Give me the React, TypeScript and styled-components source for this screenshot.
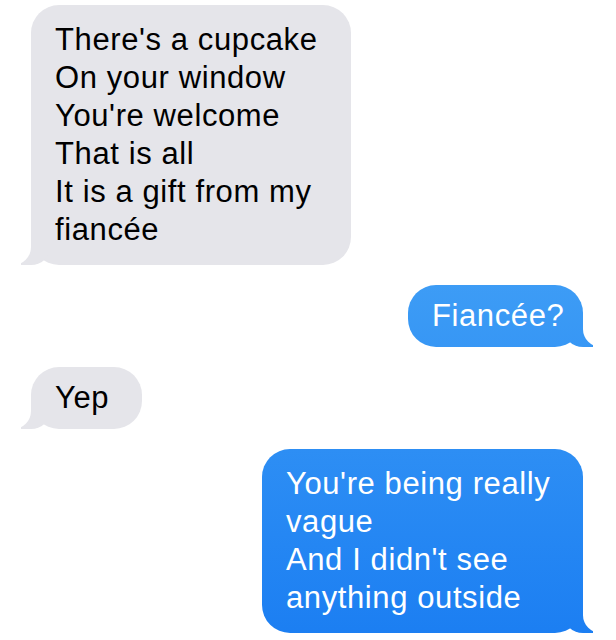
import React from "react";
import styled, { createGlobalStyle, css } from "styled-components";

const GlobalStyle = createGlobalStyle`
  html, body {
    margin: 0;
    padding: 0;
    background: #ffffff;
  }
  body {
    font-family: "Liberation Sans", Arial, sans-serif;
    -webkit-font-smoothing: antialiased;
  }
`;

type Side = "in" | "out";

const INCOMING = "#e5e5ea";
// iOS tints sent bubbles with a gradient fixed to the screen, lighter at the top
const OUTGOING = "linear-gradient(180deg, #58b4f8 0px, #1b7ef2 640px) fixed";

const Thread = styled.div`
  width: 616px;
  height: 640px;
  box-sizing: border-box;
  padding: 5px 33px 0 31px;
  display: flex;
  flex-direction: column;
  gap: 20px;
  overflow: hidden;
  background: #ffffff;
`;

const Bubble = styled.div<{ $side: Side; $width: number; $tight?: boolean }>`
  position: relative;
  box-sizing: border-box;
  width: ${(p) => p.$width}px;
  padding: ${(p) => (p.$tight ? "12px" : "16px")} 22px 0 24px;
  padding-bottom: ${(p) => (p.$tight ? "12px" : "16px")};
  border-radius: 28px;
  font-size: 31px;
  line-height: 38px;
  letter-spacing: 0.6px;
  white-space: nowrap;
  align-self: ${(p) => (p.$side === "in" ? "flex-start" : "flex-end")};
  color: ${(p) => (p.$side === "in" ? "#000000" : "#ffffff")};
  background: ${(p) => (p.$side === "in" ? INCOMING : OUTGOING)};

  /* tail */
  &::before {
    content: "";
    position: absolute;
    bottom: 0;
    width: 30px;
    height: 28px;
    background: inherit;
  }
  /* white cut that shapes the tail's outer curve */
  &::after {
    content: "";
    position: absolute;
    bottom: 0;
    width: 22px;
    height: 30px;
    background: #ffffff;
  }

  ${(p) =>
    p.$side === "in"
      ? css`
          &::before {
            left: -10px;
            border-bottom-right-radius: 20px;
          }
          &::after {
            left: -22px;
            border-bottom-right-radius: 18px;
          }
        `
      : css`
          &::before {
            right: -10px;
            border-bottom-left-radius: 20px;
          }
          &::after {
            right: -22px;
            border-bottom-left-radius: 18px;
          }
        `}
`;

const Text = styled.span`
  position: relative;
  z-index: 1;
`;

export default function App() {
  return (
    <>
      <GlobalStyle />
      <Thread>
        <Bubble $side="in" $width={320}>
          <Text>
            There's a cupcake
            <br />
            On your window
            <br />
            You're welcome
            <br />
            That is all
            <br />
            It is a gift from my
            <br />
            fiancée
          </Text>
        </Bubble>
        <Bubble $side="out" $width={175} $tight>
          <Text>Fiancée?</Text>
        </Bubble>
        <Bubble $side="in" $width={111} $tight>
          <Text>Yep</Text>
        </Bubble>
        <Bubble $side="out" $width={321}>
          <Text>
            You're being really
            <br />
            vague
            <br />
            And I didn't see
            <br />
            anything outside
          </Text>
        </Bubble>
      </Thread>
    </>
  );
}
